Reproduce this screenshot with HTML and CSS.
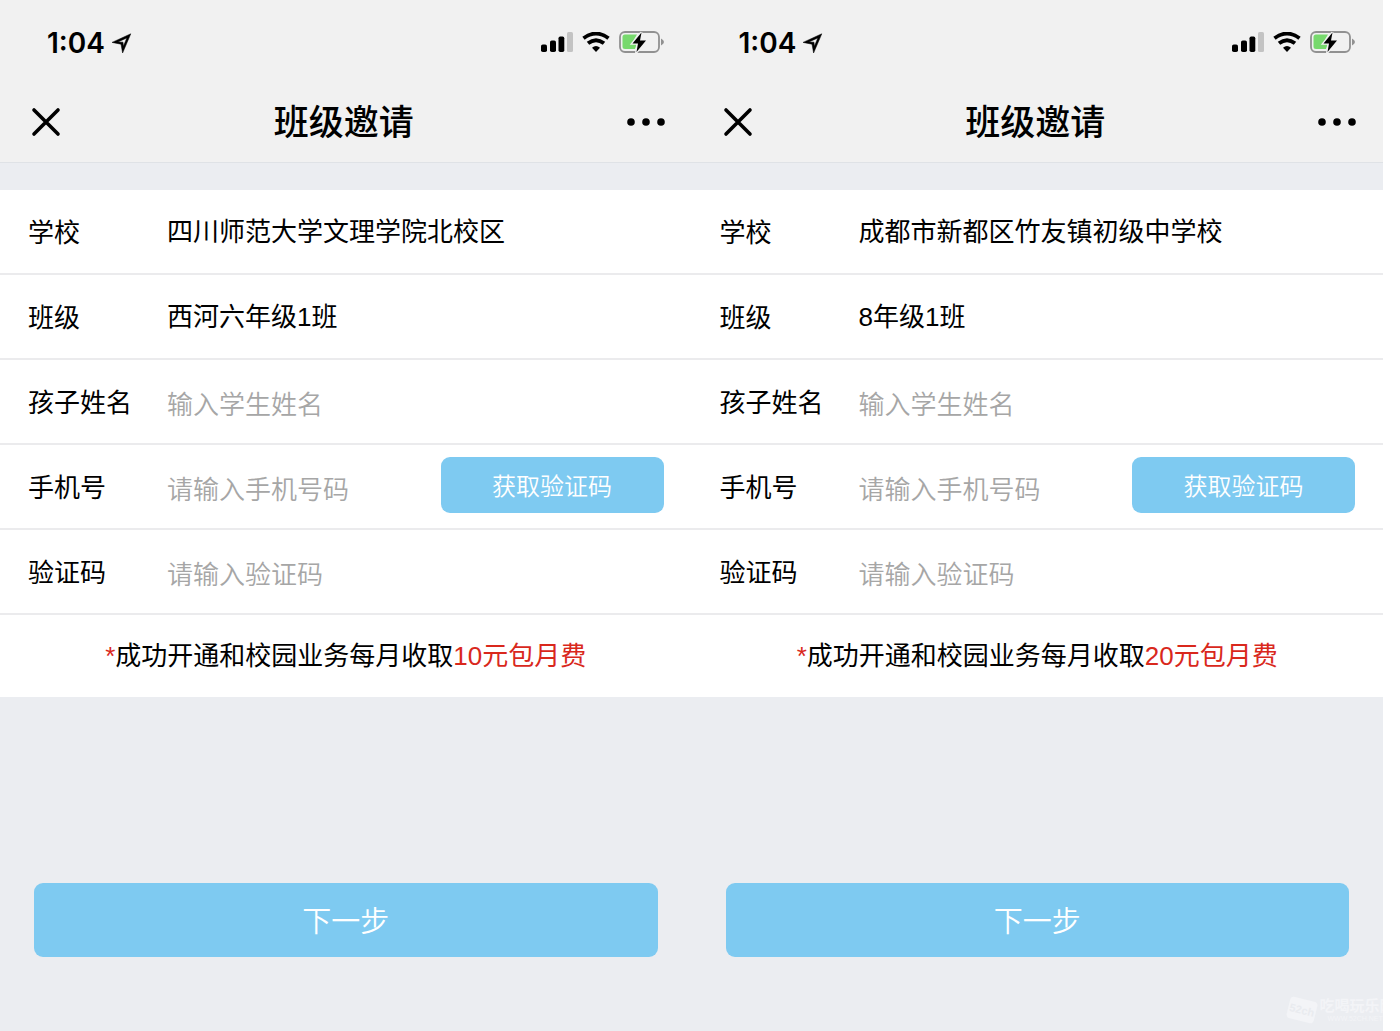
FILE: index.html
```html
<!DOCTYPE html>
<html lang="zh-CN">
<head>
<meta charset="utf-8">
<meta name="viewport" content="width=device-width, initial-scale=1">
<title>班级邀请</title>
<link rel="stylesheet" href="styles.css">
</head>
<body>
<svg class="sprite" aria-hidden="true">
  <symbol id="i-location" viewBox="0 0 20 20"><path d="M0 9.400 18.800 .8 10.600 20 9 11.200ZM6 8.900 11 9.200 11.400 13.200 14.800 5Z" fill-rule="evenodd" stroke="#000" stroke-width=".5"/></symbol>
  <symbol id="i-signal" viewBox="0 0 32 20"><rect x="0" y="12.500" width="6" height="7.500" rx="1.800"/><rect x="9" y="8.500" width="6" height="11.500" rx="1.800"/><rect x="17.500" y="4.500" width="5.800" height="15.500" rx="1.700"/><rect x="26" y="0" width="6" height="20" rx="1.500" fill="#c3c3c3"/></symbol>
  <symbol id="i-wifi" viewBox="0 0 28 20"><path d="M1.500 6.200Q14-3 26.500 6.200M6 11.300Q14 5 22 11.300" fill="none" stroke="#000" stroke-width="3.900"/><path d="M10 15.800Q14 12.300 18 15.800L14 20Z"/></symbol>
  <symbol id="i-battery" viewBox="0 0 46 22"><rect x="1" y="1" width="39" height="20" rx="5" fill="none" stroke="#919191" stroke-width="1.800"/><path d="M42 7.500Q48 11 42 14.500Z" fill="#919191"/><path d="M6 3.500H18L13 12H18L16 18H6Q3.500 18 3.500 15.500V6Q3.500 3.500 6 3.500Z" fill="#77d96d"/><path d="M22.500 1.500 13.500 12.500H19L17.500 21 27 9.500H21Z" stroke="#f1f1f1" stroke-width="2.600" paint-order="stroke"/></symbol>
  <symbol id="i-close" viewBox="0 0 30 30"><path d="M3 3 27 27M27 3 3 27" fill="none" stroke="#000" stroke-width="3.600" stroke-linecap="round"/></symbol>
  <symbol id="i-more" viewBox="0 0 38 8"><circle cx="4" cy="4" r="3.800"/><circle cx="19" cy="4" r="3.800"/><circle cx="34" cy="4" r="3.800"/></symbol>
</svg>
<main class="screens">
  <section class="phone">
    <header class="top">
      <div class="status">
        <span class="time">1:04</span>
        <svg class="location"><use href="#i-location"/></svg>
        <div class="indicators">
          <svg class="signal"><use href="#i-signal"/></svg>
          <svg class="wifi"><use href="#i-wifi"/></svg>
          <svg class="battery"><use href="#i-battery"/></svg>
        </div>
      </div>
      <div class="nav">
        <button class="icon-button" type="button" aria-label="关闭"><svg class="close"><use href="#i-close"/></svg></button>
        <h1 class="title">班级邀请</h1>
        <button class="icon-button end" type="button" aria-label="更多"><svg class="more"><use href="#i-more"/></svg></button>
      </div>
    </header>
    <form class="form">
      <div class="row"><label for="school-a">学校</label><input id="school-a" type="text" value="四川师范大学文理学院北校区" readonly></div>
      <div class="row"><label for="class-a">班级</label><input id="class-a" type="text" value="西河六年级1班" readonly></div>
      <div class="row"><label for="name-a">孩子姓名</label><input class="entry" id="name-a" type="text" placeholder="输入学生姓名"></div>
      <div class="row"><label for="phone-a">手机号</label><input class="entry" id="phone-a" type="tel" placeholder="请输入手机号码"><button class="code" type="button">获取验证码</button></div>
      <div class="row"><label for="code-a">验证码</label><input class="entry" id="code-a" type="text" placeholder="请输入验证码"></div>
      <p class="fee"><span class="red">*</span>成功开通和校园业务每月收取<span class="red">10元包月费</span></p>
      <div class="action"><button class="next" type="submit">下一步</button></div>
    </form>
  </section>
  <section class="phone">
    <header class="top">
      <div class="status">
        <span class="time">1:04</span>
        <svg class="location"><use href="#i-location"/></svg>
        <div class="indicators">
          <svg class="signal"><use href="#i-signal"/></svg>
          <svg class="wifi"><use href="#i-wifi"/></svg>
          <svg class="battery"><use href="#i-battery"/></svg>
        </div>
      </div>
      <div class="nav">
        <button class="icon-button" type="button" aria-label="关闭"><svg class="close"><use href="#i-close"/></svg></button>
        <h1 class="title">班级邀请</h1>
        <button class="icon-button end" type="button" aria-label="更多"><svg class="more"><use href="#i-more"/></svg></button>
      </div>
    </header>
    <form class="form">
      <div class="row"><label for="school-b">学校</label><input id="school-b" type="text" value="成都市新都区竹友镇初级中学校" readonly></div>
      <div class="row"><label for="class-b">班级</label><input id="class-b" type="text" value="8年级1班" readonly></div>
      <div class="row"><label for="name-b">孩子姓名</label><input class="entry" id="name-b" type="text" placeholder="输入学生姓名"></div>
      <div class="row"><label for="phone-b">手机号</label><input class="entry" id="phone-b" type="tel" placeholder="请输入手机号码"><button class="code" type="button">获取验证码</button></div>
      <div class="row"><label for="code-b">验证码</label><input class="entry" id="code-b" type="text" placeholder="请输入验证码"></div>
      <p class="fee"><span class="red">*</span>成功开通和校园业务每月收取<span class="red">20元包月费</span></p>
      <div class="action"><button class="next" type="submit">下一步</button></div>
    </form>
    <div class="watermark">
      <span class="mark-logo">52ch</span>
      <span class="mark-text"><span class="mark-name">吃喝玩乐网</span><span class="mark-url">WWW.52CH.NET</span></span>
    </div>
  </section>
</main>
</body>
</html>
```
FILE: styles.css
```css
* { box-sizing: border-box; }

body {
  margin: 0;
  background: #fff;
  color: #000;
  font-family: "Liberation Sans", "Noto Sans CJK SC", sans-serif;
  font-size: 26px;
}

.sprite { position: absolute; width: 0; height: 0; }

.screens {
  display: grid;
  grid-template-columns: 1fr 1fr;
  min-height: 100vh;
  padding-right: 17px;
}

.phone {
  position: relative;
  overflow: hidden;
  background: #ebedf1;
}

.top {
  background: #f1f1f1;
  border-bottom: 1px solid #dfe2e6;
}

.status {
  display: flex;
  align-items: center;
  height: 84px;
  padding: 0 27px 0 47px;
}

.time {
  padding-top: 2px;
  font: 600 28px/32px Inter, sans-serif;
}

.location { width: 20px; height: 20px; margin: 2px 0 0 7px; }

.indicators {
  display: flex;
  align-items: center;
  gap: 9px;
  margin-left: auto;
}

.signal { width: 32px; height: 20px; }
.wifi { width: 28px; height: 20px; }
.battery { width: 46px; height: 22px; }

.nav {
  display: grid;
  grid-template-columns: 60px 1fr 68px;
  align-items: center;
  height: 78px;
  padding: 0 27px 2px 31px;
}

.icon-button {
  display: flex;
  height: 44px;
  align-items: center;
  padding: 0;
  border: 0;
  background: none;
}

.end { justify-content: flex-end; }
.close { width: 30px; height: 30px; }
.more { width: 38px; height: 8px; }

.title {
  margin: 0;
  padding-top: 2px;
  font-size: 35px;
  font-weight: 500;
  line-height: 44px;
  text-align: center;
}

.form { padding-top: 27px; }

.row {
  display: flex;
  align-items: center;
  height: 85px;
  padding: 0 28px;
  background: #fff;
  border-bottom: 2px solid #ebebed;
}

.row label { flex: 0 0 139px; padding-top: 2px; line-height: 40px; }

.row input {
  flex: 1;
  min-width: 0;
  height: 44px;
  padding: 0 0 4px;
  border: 0;
  outline: 0;
  background: none;
  color: #000;
  font: inherit;
}

.row .entry { padding: 8px 0 0; }

.row input::placeholder { color: #a6a6a6; font-weight: 350; opacity: 1; }

.code,
.next {
  border: 0;
  border-radius: 9px;
  background: #7ecaf1;
  color: #fff;
  font-family: inherit;
  font-weight: 350;
}

.code {
  flex: 0 0 223px;
  height: 56px;
  margin-bottom: 3px;
  padding: 0 0 2px;
  font-size: 24px;
}

.fee {
  margin: 0;
  padding: 20px 0;
  background: #fff;
  line-height: 42px;
  text-align: center;
}

.red { color: #d9281c; }

.action { padding: 186px 34px 74px; }

.next {
  display: block;
  width: 100%;
  height: 74px;
  padding: 0 0 2px;
  font-size: 29px;
}

.watermark {
  position: absolute;
  bottom: 8px;
  left: 596px;
  display: flex;
  align-items: center;
  gap: 4px;
  color: #f3f4f7;
  white-space: nowrap;
}

.mark-logo {
  width: 28px;
  padding: 2px 0;
  border-radius: 4px;
  background: #f3f4f7;
  color: #e9ebef;
  font-size: 11px;
  font-weight: 700;
  line-height: 18px;
  text-align: center;
  transform: rotate(14deg);
}

.mark-text { display: grid; }
.mark-name { font-size: 15px; font-weight: 700; line-height: 18px; }
.mark-url { padding-left: 8px; font-size: 7px; line-height: 8px; }
```
